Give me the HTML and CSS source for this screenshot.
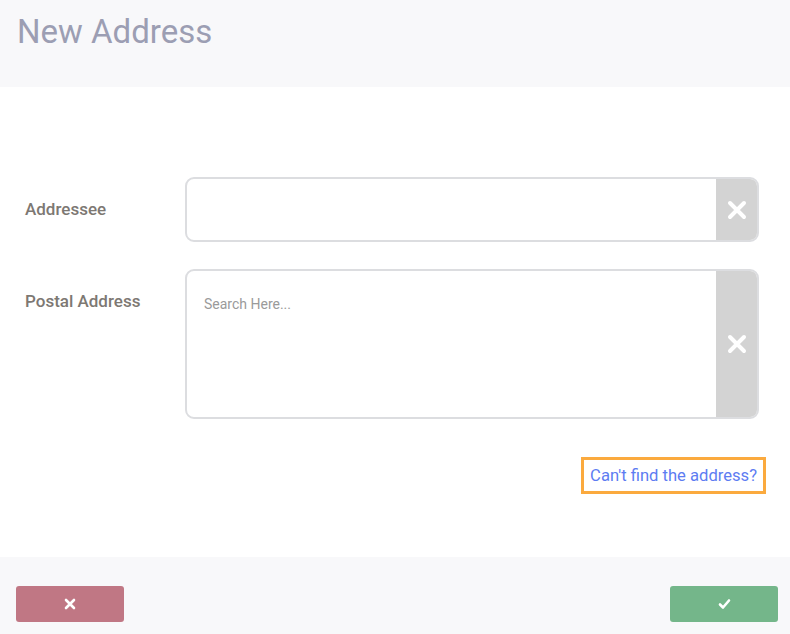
FILE: index.html
```html
<!DOCTYPE html>
<html>
<head>
<meta charset="utf-8">
<link rel="stylesheet" href="styles.css">
</head>
<body>
<div class="page">
  <header class="header">
    <h1 class="title">New Address</h1>
  </header>
  <main class="content">
    <div class="row">
      <label class="label">Addressee</label>
      <div class="field field-single">
        <input class="input" type="text">
        <button class="clear" type="button" aria-label="Clear">
          <svg width="20" height="20" viewBox="0 0 20 20"><path d="M3 3 L17 17 M17 3 L3 17" stroke="#fff" stroke-width="4" stroke-linecap="round"/></svg>
        </button>
      </div>
    </div>
    <div class="row">
      <label class="label">Postal Address</label>
      <div class="field field-multi">
        <textarea class="textarea" placeholder="Search Here..."></textarea>
        <button class="clear" type="button" aria-label="Clear">
          <svg width="20" height="20" viewBox="0 0 20 20"><path d="M3 3 L17 17 M17 3 L3 17" stroke="#fff" stroke-width="4" stroke-linecap="round"/></svg>
        </button>
      </div>
    </div>
    <div class="link-row">
      <a class="link" href="#">Can't find the address?</a>
    </div>
  </main>
  <footer class="footer">
    <button class="btn btn-cancel" type="button" aria-label="Cancel">
      <svg width="12" height="12" viewBox="0 0 12 12"><path d="M2 2 L10 10 M10 2 L2 10" stroke="#fff" stroke-width="2.6" stroke-linecap="round"/></svg>
    </button>
    <button class="btn btn-ok" type="button" aria-label="Confirm">
      <svg width="13" height="12" viewBox="0 0 13 12"><path d="M2 6.5 L5 9.5 L11 2.5" fill="none" stroke="#fff" stroke-width="2.6" stroke-linecap="round" stroke-linejoin="round"/></svg>
    </button>
  </footer>
</div>
</body>
</html>
```
FILE: styles.css
```css
* { box-sizing: border-box; }
html, body { margin: 0; padding: 0; }
body {
  font-family: Roboto, "Liberation Sans", sans-serif;
  background: #fff;
  width: 790px;
  height: 634px;
  overflow: hidden;
}
.page {
  display: flex;
  flex-direction: column;
  height: 634px;
}
.header {
  background: #f8f8fa;
  height: 87px;
  padding: 13px 17px 0;
}
.title {
  margin: 0;
  font-size: 33px;
  font-weight: 400;
  line-height: 38px;
  color: #9c9eb3;
}
.content {
  height: 470px;
  padding: 90px 31px 0 25px;
  display: flex;
  flex-direction: column;
  gap: 27px;
}
.row {
  display: flex;
  align-items: flex-start;
}
.label {
  width: 160px;
  flex: none;
  padding-top: 22px;
  font-size: 17px;
  font-weight: 500;
  line-height: 20px;
  color: #7d7873;
}
.field {
  flex: 1;
  display: flex;
  border: 2px solid #dcdde0;
  border-radius: 9px;
  overflow: hidden;
  background: #fff;
}
.field-single { height: 65px; }
.field-multi { height: 150px; }
.input, .textarea {
  flex: 1;
  border: none;
  outline: none;
  background: transparent;
  font-family: Roboto, "Liberation Sans", sans-serif;
  font-size: 14px;
  color: #555;
  padding: 0 17px;
}
.textarea {
  resize: none;
  padding: 24px 17px;
  line-height: 18px;
}
.textarea::placeholder { color: #9a9a9a; }
.clear {
  width: 41px;
  flex: none;
  border: none;
  background: #d3d3d3;
  display: flex;
  align-items: center;
  justify-content: center;
  padding: 0;
}
.link-row {
  display: flex;
  justify-content: flex-end;
  margin-top: 11px;
  margin-right: -7px;
}
.link {
  display: inline-block;
  border: 3px solid #fbaa3e;
  padding: 0 6px;
  height: 37px;
  line-height: 31px;
  font-size: 16.6px;
  color: #5d7cf2;
  text-decoration: none;
}
.footer {
  flex: 1;
  background: #f8f8fa;
  display: flex;
  justify-content: space-between;
  align-items: flex-start;
  padding: 29px 12px 0 16px;
}
.btn {
  width: 108px;
  height: 36px;
  border: none;
  border-radius: 3px;
  display: flex;
  align-items: center;
  justify-content: center;
  padding: 0;
}
.btn-cancel { background: #c07784; }
.btn-ok { background: #74b68a; }
```
